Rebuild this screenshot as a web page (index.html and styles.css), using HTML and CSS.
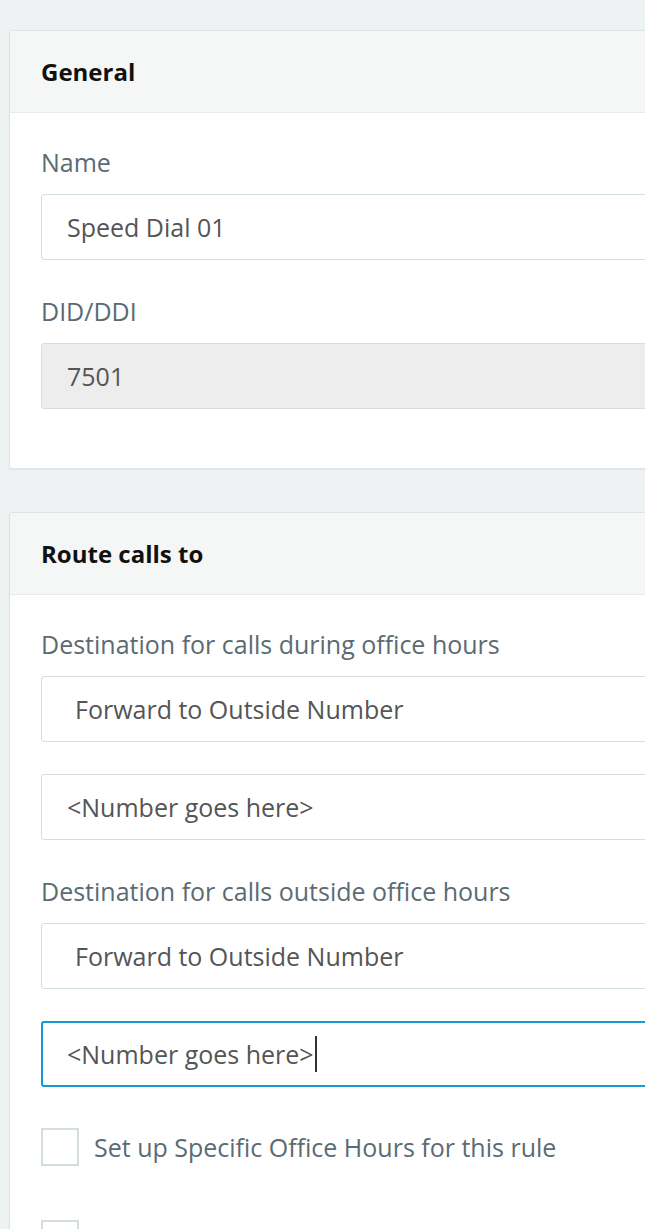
FILE: index.html
```html
<!DOCTYPE html>
<html lang="en">
<head>
  <meta charset="UTF-8">
  <title>Speed Dial 01</title>
  <link rel="stylesheet" href="styles.css">
</head>
<body>

<div class="page">

  <div class="card">
    <div class="card-header">
      <h2>General</h2>
    </div>
    <div class="card-body">
      <div class="form-group">
        <label>Name</label>
        <div class="field">Speed Dial 01</div>
      </div>
      <div class="form-group">
        <label>DID/DDI</label>
        <div class="field disabled">7501</div>
      </div>
    </div>
  </div>

  <div class="card">
    <div class="card-header">
      <h2>Route calls to</h2>
    </div>
    <div class="card-body">
      <div class="form-group">
        <label>Destination for calls during office hours</label>
        <div class="field select">Forward to Outside Number</div>
        <div class="field">&lt;Number goes here&gt;</div>
      </div>
      <div class="form-group">
        <label>Destination for calls outside office hours</label>
        <div class="field select">Forward to Outside Number</div>
        <div class="field focused">&lt;Number goes here&gt;<span class="caret"></span></div>
      </div>
      <div class="check-row">
        <span class="checkbox"></span>
        <span>Set up Specific Office Hours for this rule</span>
      </div>
      <div class="check-row">
        <span class="checkbox"></span>
        <span>Block all incoming calls when the line is busy</span>
      </div>
    </div>
  </div>

</div>

</body>
</html>
```

FILE: styles.css
```css
html, body {
  margin: 0;
  padding: 0;
  overflow: hidden;
}

body {
  font-family: "Open Sans", "Noto Sans", sans-serif;
  background-color: #eef2f3;
  color: #5b6b73;
}

.page {
  padding: 30px 0 0 9px;
  width: 760px;
}

.card {
  background: #fff;
  border: 1px solid #dde4e5;
  border-radius: 3px;
  box-shadow: 0 1px 2px rgba(0, 0, 0, 0.06);
  margin-bottom: 43px;
}

.card-header {
  height: 81px;
  background: #f5f7f7;
  border-bottom: 1px solid #e6ebeb;
  padding: 0 31px;
  display: flex;
  align-items: center;
}

.card-header h2 {
  margin: 0;
  font-size: 24px;
  font-weight: bold;
  color: #111;
}

.card-body {
  padding: 36px 31px 21px;
}

.form-group {
  margin-bottom: 38px;
}

label {
  display: block;
  font-size: 25px;
  line-height: 27px;
  margin-bottom: 18px;
}

.field {
  height: 64px;
  border: 1px solid #d3dede;
  border-radius: 3px;
  padding: 0 25px;
  display: flex;
  align-items: center;
  font-size: 25px;
  color: #555;
  background: #fff;
}

.field + .field {
  margin-top: 32px;
}

.field.disabled {
  background: #ededed;
}

.field.select {
  padding-left: 33px;
}

.field.focused {
  border: 2px solid #169ad4;
  height: 62px;
  padding-left: 24px;
}

.caret {
  display: inline-block;
  width: 2px;
  height: 36px;
  background: #333;
  margin-left: 1px;
}

.check-row {
  display: flex;
  align-items: center;
  gap: 15px;
  font-size: 25px;
  margin-top: 41px;
  margin-bottom: 54px;
}

.check-row + .check-row {
  margin-top: 0;
}

.checkbox {
  width: 34px;
  height: 34px;
  border: 2px solid #d3dede;
  flex-shrink: 0;
}
```
